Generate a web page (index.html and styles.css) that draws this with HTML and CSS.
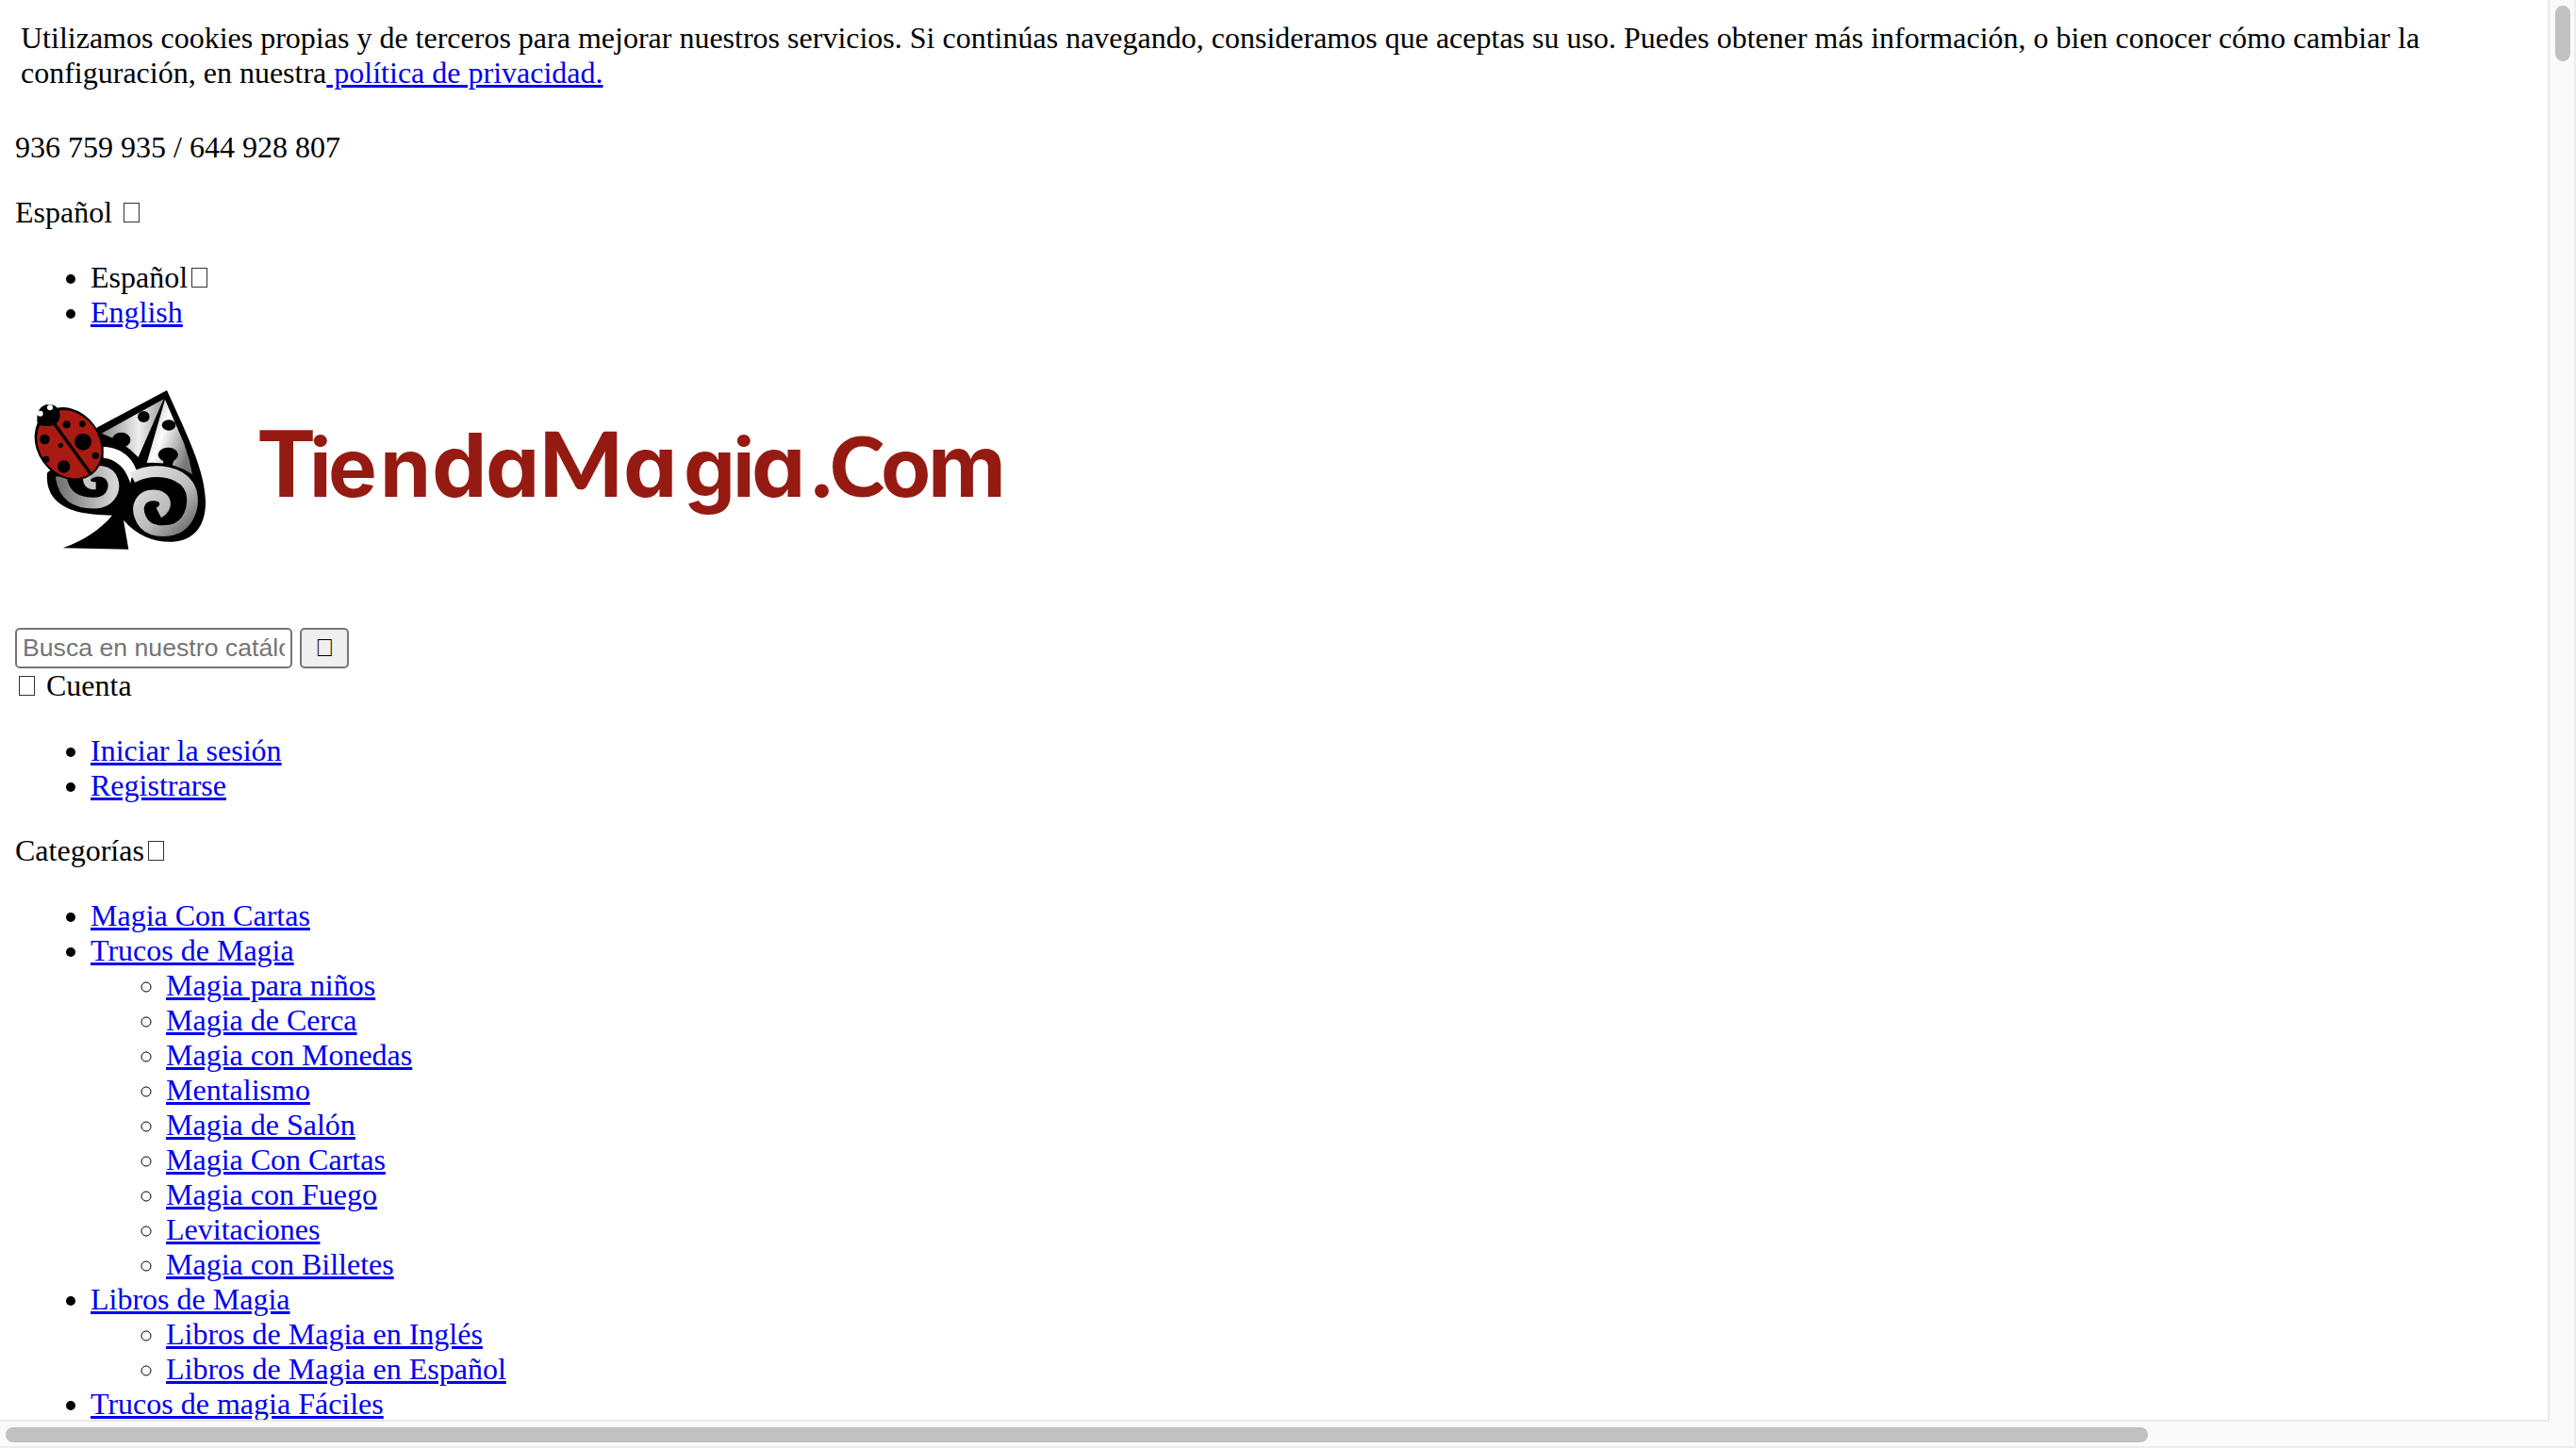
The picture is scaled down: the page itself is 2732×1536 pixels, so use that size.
FILE: index.html
```html
<!DOCTYPE html>
<html lang="es">
<head>
<meta charset="utf-8">
<title>TiendaMagia</title>
<link rel="stylesheet" href="styles.css">
</head>
<body>
<div class="window">
<main class="page">
  <div class="cookies">Utilizamos cookies propias y de terceros para mejorar nuestros servicios. Si continúas navegando, consideramos que aceptas su uso. Puedes obtener más información, o bien conocer cómo cambiar la configuración, en nuestra<a href="#"> política de privacidad.</a></div>
  <p class="line">936 759 935 / 644 928 807</p>
  <p class="line">Español <i class="glyph"></i></p>
  <ul class="list">
    <li>Español<i class="glyph"></i></li>
    <li><a href="#">English</a></li>
  </ul>
  <svg class="logo" viewBox="0 0 1100 285" role="img" aria-label="TiendaMagia.Com">
    <defs>
      <linearGradient id="left" x1="0" y1="0" x2="1" y2="0"><stop offset="0" stop-color="#888"/><stop offset=".6" stop-color="#eee"/><stop offset="1" stop-color="#999"/></linearGradient>
      <linearGradient id="right" x1="0" y1="0" x2="1" y2=".6"><stop offset="0" stop-color="#999"/><stop offset=".45" stop-color="#fff"/><stop offset="1" stop-color="#777"/></linearGradient>
      <linearGradient id="curl" x1="0" y1="0" x2="1" y2="1"><stop offset="0" stop-color="#e6e6e6"/><stop offset=".6" stop-color="#bbb"/><stop offset="1" stop-color="#666"/></linearGradient>
      <linearGradient id="curl2" x1="0" y1="0" x2="1" y2="0"><stop offset="0" stop-color="#777"/><stop offset="1" stop-color="#d4d4d4"/></linearGradient>
    </defs>
    <g transform="translate(-16 9) scale(.33333)">
      <path d="M531 72L310 190L150 335C145 400 180 435 230 453C275 468 320 468 357 470C320 515 265 550 200 574L409 578L393 485C435 535 495 557 550 554C620 550 655 500 654 425C650 330 605 240 580 180Z"/>
      <path fill="url(#left)" d="M521 100L323 209Q390 232 440 285Z"/>
      <path fill="url(#right)" d="M525 101L467 303Q550 298 612 340Q604 290 585 240Z"/>
      <ellipse cx="386" cy="230" rx="29" ry="24"/><ellipse cx="457" cy="156" rx="19" ry="18"/><ellipse cx="537" cy="183" rx="22" ry="17"/><ellipse cx="535" cy="277" rx="32" ry="23"/><path d="M520 290h35l-8 24h-28z"/>
      <path fill="#fff" d="M329 252C375 252 420 280 434 327C422 340 416 352 415 370C402 320 370 291 329 287Z"/>
      <g fill="none" stroke-width="35">
        <path stroke="url(#curl)" d="M505 462C536 446 532 406 488 406C448 406 433 440 445 472C460 518 505 524 545 517C598 505 622 445 608 392C585 330 490 313 421 350"/>
        <path stroke="url(#curl2)" d="M194 345C202 410 245 431 300 431C340 431 370 400 359 360C348 325 300 320 275 345"/>
        <path stroke="#c8c8c8" stroke-width="24" d="M277 340C272 368 282 376 305 376"/>
      </g>
      <g transform="rotate(-36 219 242)">
        <ellipse cx="219" cy="242" rx="101" ry="123"/>
        <ellipse cx="219" cy="244" rx="95" ry="115" fill="#a91a12"/>
        <path d="M214 155h10v207h-10z"/>
      </g>
      <path d="M120 184C112 140 130 116 157 117C184 116 195 145 190 160C185 180 170 188 145 185Z"/>
      <circle cx="128" cy="146" r="9" fill="#fff"/><circle cx="159" cy="127" r="9" fill="#fff"/>
      <circle cx="212" cy="181" r="12"/><circle cx="262" cy="179" r="10"/><circle cx="264" cy="236" r="27"/><circle cx="142" cy="228" r="16"/><circle cx="193" cy="247" r="8"/><circle cx="146" cy="292" r="11"/><circle cx="203" cy="315" r="20"/><circle cx="304" cy="280" r="11"/>
    </g>
    <text class="wordmark" y="146"><tspan class="tall" x="258">T</tspan><tspan x="312 332 387">ien</tspan><tspan class="stem" x="442">d</tspan><tspan class="bowl" x="499">a</tspan><tspan class="peak" x="555">M</tspan><tspan class="bowl" x="645">a</tspan><tspan x="709 761">gi</tspan><tspan class="bowl" x="781">a</tspan><tspan x="841">.</tspan><tspan class="arc" x="864">C</tspan><tspan x="918">o</tspan><tspan class="bowl" x="968">m</tspan></text>
  </svg>
  <form class="search">
    <input class="field" type="text" placeholder="Busca en nuestro catálogo">
    <button class="go" type="button">&#xE8B6;</button>
  </form>
  <div class="account"><i class="glyph"></i> Cuenta</div>
  <ul class="list">
    <li><a href="#">Iniciar la sesión</a></li>
    <li><a href="#">Registrarse</a></li>
  </ul>
  <p class="line">Categorías<i class="glyph"></i></p>
  <ul class="list">
    <li><a href="#">Magia Con Cartas</a></li>
    <li><a href="#">Trucos de Magia</a>
      <ul class="sublist">
        <li><a href="#">Magia para niños</a></li>
        <li><a href="#">Magia de Cerca</a></li>
        <li><a href="#">Magia con Monedas</a></li>
        <li><a href="#">Mentalismo</a></li>
        <li><a href="#">Magia de Salón</a></li>
        <li><a href="#">Magia Con Cartas</a></li>
        <li><a href="#">Magia con Fuego</a></li>
        <li><a href="#">Levitaciones</a></li>
        <li><a href="#">Magia con Billetes</a></li>
      </ul>
    </li>
    <li><a href="#">Libros de Magia</a>
      <ul class="sublist">
        <li><a href="#">Libros de Magia en Inglés</a></li>
        <li><a href="#">Libros de Magia en Español</a></li>
      </ul>
    </li>
    <li><a href="#">Trucos de magia Fáciles</a></li>
  </ul>
</main>
<div class="vbar"><div class="vthumb"></div></div>
<div class="hbar"><div class="hthumb"></div></div>
<div class="corner"></div>
</div>
</body>
</html>
```
FILE: styles.css
```css
* { box-sizing: border-box; }
html, body { margin: 0; height: 100%; overflow: hidden; background: #fff; }
body { font: 32px/37px "Liberation Serif", serif; color: #000; }
a { color: #0000ee; text-decoration: underline; }
.window {
  display: grid;
  grid-template: 1506px 30px / 2702px 30px;
  width: 2732px;
  height: 1536px;
}
.page { overflow: hidden; padding: 16px; min-height: 0; }
.cookies { padding: 6px 6px 10px; }
.line { margin: 32px 0; }
.list { margin: 32px 0; padding-left: 80px; list-style: disc; }
.sublist { margin: 0; padding-left: 80px; list-style: circle; }
.glyph {
  display: inline-block;
  width: 17px;
  height: 21px;
  margin: 0 4px;
  border: 1px solid #333;
  vertical-align: baseline;
}
.logo { display: block; width: 1100px; height: 285px; margin-top: -1px; }
.wordmark {
  font: 700 87px Inter, sans-serif;
  font-feature-settings: "cv11" 1;
  fill: #951b12;
}
.tall { font: 900 98px Lato, sans-serif; }
.stem { font-size: 93px; }
.bowl { font-size: 91px; }
.peak { font: 900 95px Lato, sans-serif; }
.arc { font: 900 88px Lato, sans-serif; }
.search { display: flex; gap: 8px; height: 43px; }
.field {
  width: 294px;
  border: 2px solid #767676;
  border-radius: 5px;
  padding: 0 6px;
  background: #fff;
  font: 26.667px "Liberation Sans", sans-serif;
}
.field::placeholder { color: #757575; }
.go {
  width: 52px;
  border: 2px solid #767676;
  border-radius: 5px;
  padding: 0;
  background: #efefef;
  color: #000;
  font: 26.667px "Liberation Sans", sans-serif;
}
.account { margin-bottom: 32px; }
.vbar {
  border-left: 2px solid #e8e8e8;
  border-right: 2px solid #ededed;
  background: #fafafa;
  padding: 6px 4px 0 6px;
}
.vthumb { width: 16px; height: 59px; border-radius: 8px; background: #c1c1c1; }
.hbar {
  border-top: 2px solid #e8e8e8;
  border-bottom: 2px solid #ededed;
  background: #fafafa;
  padding: 6px 0 0 6px;
}
.hthumb { width: 2272px; height: 16px; border-radius: 8px; background: #c1c1c1; }
.corner {
  border-right: 2px solid #ededed;
  border-bottom: 2px solid #ededed;
  background: linear-gradient(#e8e8e8, #e8e8e8) 0 0 / 2px 2px no-repeat #fafafa;
}
```
